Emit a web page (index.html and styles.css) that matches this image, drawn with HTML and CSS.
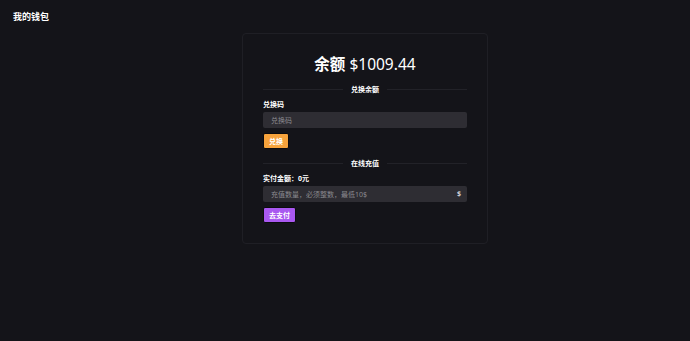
FILE: index.html
```html
<!DOCTYPE html>
<html lang="zh-CN">
<head>
    <meta charset="UTF-8">
    <meta name="viewport" content="width=device-width, initial-scale=1.0">
    <title>我的钱包</title>
    <link rel="stylesheet" href="styles.css">
</head>
<body>
    <header class="top-bar">
        <h1>我的钱包</h1>
    </header>

    <main class="main">
        <div class="wallet-card">
            <h2 class="balance"><span class="balance-label">余额</span> $1009.44</h2>

            <div class="divider"><span>兑换余额</span></div>
            <div class="form-group">
                <label for="code">兑换码</label>
                <input type="text" id="code" placeholder="兑换码">
            </div>
            <button class="btn btn-orange">兑换</button>

            <div class="divider"><span>在线充值</span></div>
            <div class="form-group">
                <label for="amount">实付金额：0元</label>
                <div class="input-wrap">
                    <input type="text" id="amount" placeholder="充值数量，必须整数，最低10$">
                    <span class="suffix">$</span>
                </div>
            </div>
            <button class="btn btn-purple">去支付</button>
        </div>
    </main>
</body>
</html>
```

FILE: styles.css
```css
body {
    font-family: "Noto Sans", "Noto Sans CJK SC", sans-serif;
    background-color: #141419;
    color: #ffffff;
    margin: 0;
    height: 100vh;
}

.top-bar {
    padding: 10px 13px;
}

.top-bar h1 {
    font-size: 9px;
    font-weight: bold;
    margin: 0;
    line-height: 14px;
}

.main {
    display: flex;
    justify-content: center;
    padding-left: 40px;
}

.wallet-card {
    width: 204px;
    margin-top: -1px;
    padding: 20px 20px 20px;
    border: 1px solid #1f1f25;
    border-radius: 4px;
    display: flex;
    flex-direction: column;
    align-items: flex-start;
}

.balance {
    align-self: center;
    font-size: 15.5px;
    font-weight: normal;
    margin: -1px 0 0;
    line-height: 22px;
}

.balance-label {
    font-weight: bold;
}

.divider {
    align-self: stretch;
    display: flex;
    align-items: center;
    gap: 8px;
    font-size: 7px;
    font-weight: bold;
    margin-top: 8px;
    height: 12px;
}

.divider::before, .divider::after {
    content: "";
    flex: 1;
    height: 1px;
    background-color: #222228;
}

.form-group {
    align-self: stretch;
    margin-top: 4px;
}

.form-group + .btn {
    margin-top: 5px;
}

label {
    display: block;
    font-size: 7px;
    font-weight: bold;
    line-height: 11px;
    margin-bottom: 2px;
}

input[type="text"] {
    display: block;
    width: 100%;
    box-sizing: border-box;
    height: 16px;
    padding: 0 8px;
    font-family: inherit;
    font-size: 7px;
    background-color: #2e2d33;
    color: #ffffff;
    border: none;
    border-radius: 2px;
    outline: none;
}

input::placeholder {
    color: #8b8a90;
}

.input-wrap {
    position: relative;
}

.suffix {
    position: absolute;
    right: 6px;
    top: 2px;
    font-size: 7px;
    line-height: 12px;
    font-weight: bold;
    color: #cfcfd4;
}

.btn {
    display: block;
    padding: 0 5px;
    height: 16px;
    font-family: inherit;
    font-size: 7px;
    font-weight: bold;
    color: #ffffff;
    border: 1px solid #0b0b0e;
    border-radius: 2px;
    cursor: pointer;
}

.btn-orange {
    background-color: #f7a33c;
}

.btn-purple {
    background-color: #a958f0;
}
```
